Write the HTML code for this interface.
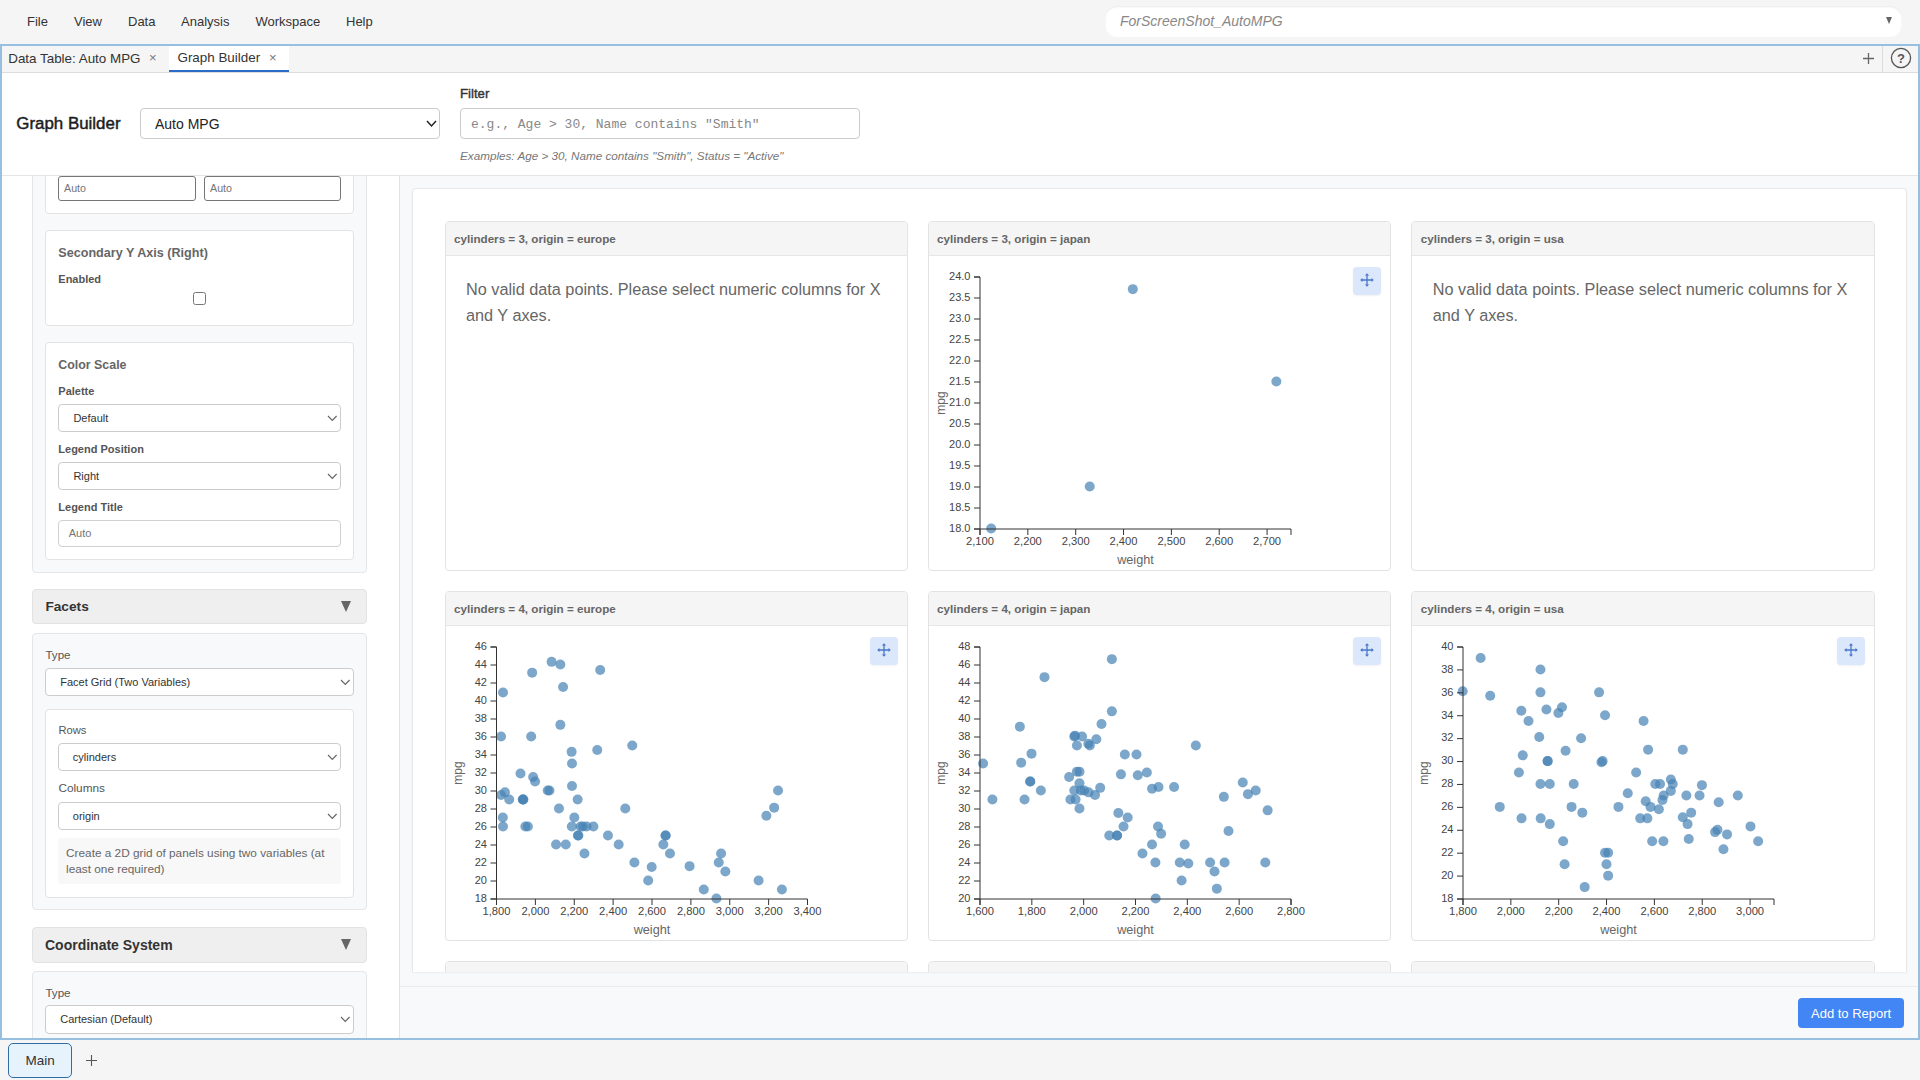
<!DOCTYPE html>
<html><head><meta charset="utf-8"><title>Graph Builder</title>
<style>html,body{margin:0;padding:0;}body{width:1920px;height:1080px;overflow:hidden;position:relative;background:#f5f5f5;font-family:'Liberation Sans', sans-serif;}</style>
</head><body>
<div style="position:absolute;left:27px;top:15.00px;font-family:'Liberation Sans', sans-serif;font-size:13px;line-height:13px;color:#333;font-weight:400;font-style:normal;white-space:nowrap;">File</div><div style="position:absolute;left:74px;top:15.00px;font-family:'Liberation Sans', sans-serif;font-size:13px;line-height:13px;color:#333;font-weight:400;font-style:normal;white-space:nowrap;">View</div><div style="position:absolute;left:128px;top:15.00px;font-family:'Liberation Sans', sans-serif;font-size:13px;line-height:13px;color:#333;font-weight:400;font-style:normal;white-space:nowrap;">Data</div><div style="position:absolute;left:181px;top:15.00px;font-family:'Liberation Sans', sans-serif;font-size:13px;line-height:13px;color:#333;font-weight:400;font-style:normal;white-space:nowrap;">Analysis</div><div style="position:absolute;left:255.5px;top:15.00px;font-family:'Liberation Sans', sans-serif;font-size:13px;line-height:13px;color:#333;font-weight:400;font-style:normal;white-space:nowrap;">Workspace</div><div style="position:absolute;left:346px;top:15.00px;font-family:'Liberation Sans', sans-serif;font-size:13px;line-height:13px;color:#333;font-weight:400;font-style:normal;white-space:nowrap;">Help</div><div style="position:absolute;left:1105px;top:6px;width:797px;height:31px;box-sizing:border-box;background:#fff;border-radius:12px;box-shadow:inset 0 1px 2px rgba(0,0,0,0.09);"></div><div style="position:absolute;left:1120px;top:14.00px;font-family:'Liberation Sans', sans-serif;font-size:14px;line-height:14px;color:#888;font-weight:400;font-style:italic;white-space:nowrap;">ForScreenShot_AutoMPG</div><div style="position:absolute;left:1886px;top:17px;width:0;height:0;border-left:3.5px solid transparent;border-right:3.5px solid transparent;border-top:7px solid #666"></div><div style="position:absolute;left:0px;top:44px;width:1920px;height:996px;box-sizing:border-box;border:2px solid #97c0e0;background:#fff;"></div><div style="position:absolute;left:2px;top:46px;width:1916px;height:27px;box-sizing:border-box;background:#f5f5f5;border-bottom:1px solid #dcdcdc;"></div><div style="position:absolute;left:8.25px;top:52.10px;font-family:'Liberation Sans', sans-serif;font-size:13.4px;line-height:13.4px;color:#333;font-weight:400;font-style:normal;white-space:nowrap;">Data Table: Auto MPG</div><div style="position:absolute;left:149px;top:51.00px;font-family:'Liberation Sans', sans-serif;font-size:13px;line-height:13px;color:#777;font-weight:400;font-style:normal;white-space:nowrap;">&#215;</div><div style="position:absolute;left:169px;top:46px;width:120px;height:26px;box-sizing:border-box;background:#fff;border-bottom:2px solid #2b6cc8;"></div><div style="position:absolute;left:177.5px;top:50.80px;font-family:'Liberation Sans', sans-serif;font-size:13.4px;line-height:13.4px;color:#333;font-weight:400;font-style:normal;white-space:nowrap;">Graph Builder</div><div style="position:absolute;left:269px;top:51.00px;font-family:'Liberation Sans', sans-serif;font-size:13px;line-height:13px;color:#777;font-weight:400;font-style:normal;white-space:nowrap;">&#215;</div><svg style="position:absolute;left:1862px;top:52px" width="13" height="13"><path d="M6.5 1V12M1 6.5H12" stroke="#666" stroke-width="1.3"/></svg><div style="position:absolute;left:1882px;top:46px;width:1px;height:26px;box-sizing:border-box;background:#dcdcdc;"></div><svg style="position:absolute;left:1890px;top:47px" width="22" height="22"><circle cx="11" cy="11" r="9.6" fill="none" stroke="#555" stroke-width="1.3"/><text x="11" y="15.5" text-anchor="middle" font-family="Liberation Sans" font-size="13" font-weight="700" fill="#555">?</text></svg><div style="position:absolute;left:2px;top:73px;width:1916px;height:103px;box-sizing:border-box;background:#fff;border-bottom:1px solid #e6e6e6;"></div><div style="position:absolute;left:16.3px;top:116.25px;font-family:'Liberation Sans', sans-serif;font-size:16.9px;line-height:16.9px;color:#1c1c1c;font-weight:400;font-style:normal;white-space:nowrap;-webkit-text-stroke:0.45px #1c1c1c;">Graph Builder</div><div style="position:absolute;left:140px;top:108px;width:300px;height:31px;box-sizing:border-box;background:#fff;border:1px solid #ccc;border-radius:4px;"></div><div style="position:absolute;left:155px;top:116.50px;font-family:'Liberation Sans', sans-serif;font-size:14px;line-height:14px;color:#222;font-weight:400;font-style:normal;white-space:nowrap;">Auto MPG</div><svg style="position:absolute;left:425.00px;top:119.00px" width="13.00" height="9.00"><polyline points="2,2 6.50,7.00 11.00,2" fill="none" stroke="#222" stroke-width="1.5"/></svg><div style="position:absolute;left:460px;top:86.90px;font-family:'Liberation Sans', sans-serif;font-size:13.2px;line-height:13.2px;color:#333;font-weight:400;font-style:normal;white-space:nowrap;-webkit-text-stroke:0.4px #333;">Filter</div><div style="position:absolute;left:460px;top:108px;width:400px;height:31px;box-sizing:border-box;background:#fff;border:1px solid #ccc;border-radius:4px;"></div><div style="position:absolute;left:471px;top:118.00px;font-family:'Liberation Mono', monospace;font-size:13px;line-height:13px;color:#888;font-weight:400;font-style:normal;white-space:nowrap;">e.g., Age &gt; 30, Name contains "Smith"</div><div style="position:absolute;left:460px;top:149.95px;font-family:'Liberation Sans', sans-serif;font-size:11.7px;line-height:11.7px;color:#777;font-weight:400;font-style:italic;white-space:nowrap;">Examples: Age &gt; 30, Name contains "Smith", Status = "Active"</div><div style="position:absolute;left:2px;top:176px;width:398px;height:862px;overflow:hidden"><div style="position:absolute;left:0px;top:0px;width:398px;height:862px;box-sizing:border-box;background:#fff;border-right:1px solid #e2e2e2;"></div><div style="position:absolute;left:30px;top:-76px;width:335px;height:473px;box-sizing:border-box;background:#f8f9fa;border:1px solid #e6e6e6;border-radius:4px;"></div><div style="position:absolute;left:43px;top:-56px;width:309px;height:94px;box-sizing:border-box;background:#fff;border:1px solid #e3e3e3;border-radius:4px;"></div><div style="position:absolute;left:56px;top:0px;width:138px;height:25px;box-sizing:border-box;background:#fff;border:1px solid #767676;border-radius:3px;"></div><div style="position:absolute;left:202px;top:0px;width:137px;height:25px;box-sizing:border-box;background:#fff;border:1px solid #767676;border-radius:3px;"></div><div style="position:absolute;left:62px;top:7.15px;font-family:'Liberation Sans', sans-serif;font-size:10.7px;line-height:10.7px;color:#757575;font-weight:400;font-style:normal;white-space:nowrap;">Auto</div><div style="position:absolute;left:208px;top:7.15px;font-family:'Liberation Sans', sans-serif;font-size:10.7px;line-height:10.7px;color:#757575;font-weight:400;font-style:normal;white-space:nowrap;">Auto</div><div style="position:absolute;left:43px;top:54px;width:309px;height:96px;box-sizing:border-box;background:#fff;border:1px solid #e3e3e3;border-radius:4px;"></div><div style="position:absolute;left:56.3px;top:71.00px;font-family:'Liberation Sans', sans-serif;font-size:12.6px;line-height:12.6px;color:#666;font-weight:700;font-style:normal;white-space:nowrap;">Secondary Y Axis (Right)</div><div style="position:absolute;left:56.3px;top:98.00px;font-family:'Liberation Sans', sans-serif;font-size:11px;line-height:11px;color:#555;font-weight:700;font-style:normal;white-space:nowrap;">Enabled</div><div style="position:absolute;left:191px;top:116px;width:13px;height:13px;box-sizing:border-box;background:#fff;border:1px solid #767676;border-radius:2.5px;"></div><div style="position:absolute;left:43px;top:166px;width:309px;height:218px;box-sizing:border-box;background:#fff;border:1px solid #e3e3e3;border-radius:4px;"></div><div style="position:absolute;left:56.3px;top:183.10px;font-family:'Liberation Sans', sans-serif;font-size:12.4px;line-height:12.4px;color:#666;font-weight:700;font-style:normal;white-space:nowrap;">Color Scale</div><div style="position:absolute;left:56.3px;top:210.00px;font-family:'Liberation Sans', sans-serif;font-size:11px;line-height:11px;color:#555;font-weight:700;font-style:normal;white-space:nowrap;">Palette</div><div style="position:absolute;left:56px;top:228px;width:283px;height:28px;box-sizing:border-box;background:#fff;border:1px solid #ccc;border-radius:4px;"></div><div style="position:absolute;left:71.4px;top:236.50px;font-family:'Liberation Sans', sans-serif;font-size:11px;line-height:11px;color:#333;font-weight:400;font-style:normal;white-space:nowrap;">Default</div><svg style="position:absolute;left:324.20px;top:237.85px" width="12.60" height="8.30"><polyline points="2,2 6.30,6.30 10.60,2" fill="none" stroke="#666" stroke-width="1.2"/></svg><div style="position:absolute;left:56.3px;top:268.00px;font-family:'Liberation Sans', sans-serif;font-size:11px;line-height:11px;color:#555;font-weight:700;font-style:normal;white-space:nowrap;">Legend Position</div><div style="position:absolute;left:56px;top:286px;width:283px;height:28px;box-sizing:border-box;background:#fff;border:1px solid #ccc;border-radius:4px;"></div><div style="position:absolute;left:71.4px;top:294.50px;font-family:'Liberation Sans', sans-serif;font-size:11px;line-height:11px;color:#333;font-weight:400;font-style:normal;white-space:nowrap;">Right</div><svg style="position:absolute;left:324.20px;top:295.85px" width="12.60" height="8.30"><polyline points="2,2 6.30,6.30 10.60,2" fill="none" stroke="#666" stroke-width="1.2"/></svg><div style="position:absolute;left:56.3px;top:326.00px;font-family:'Liberation Sans', sans-serif;font-size:11px;line-height:11px;color:#555;font-weight:700;font-style:normal;white-space:nowrap;">Legend Title</div><div style="position:absolute;left:56px;top:344px;width:283px;height:27px;box-sizing:border-box;background:#fff;border:1px solid #d0d0d0;border-radius:4px;"></div><div style="position:absolute;left:66.7px;top:352.00px;font-family:'Liberation Sans', sans-serif;font-size:11px;line-height:11px;color:#757575;font-weight:400;font-style:normal;white-space:nowrap;">Auto</div><div style="position:absolute;left:30px;top:413px;width:335px;height:35px;box-sizing:border-box;background:#efefef;border:1px solid #e2e2e2;border-radius:4px;"></div><div style="position:absolute;left:43.4px;top:423.95px;font-family:'Liberation Sans', sans-serif;font-size:13.7px;line-height:13.7px;color:#333;font-weight:700;font-style:normal;white-space:nowrap;">Facets</div><div style="position:absolute;left:339px;top:424.79999999999995px;width:0;height:0;border-left:5.5px solid transparent;border-right:5.5px solid transparent;border-top:11px solid #666"></div><div style="position:absolute;left:30px;top:457px;width:335px;height:277px;box-sizing:border-box;background:#f8f9fa;border:1px solid #e6e6e6;border-radius:4px;"></div><div style="position:absolute;left:43.4px;top:473.00px;font-family:'Liberation Sans', sans-serif;font-size:11.6px;line-height:11.6px;color:#555;font-weight:400;font-style:normal;white-space:nowrap;">Type</div><div style="position:absolute;left:43px;top:492px;width:309px;height:28px;box-sizing:border-box;background:#fff;border:1px solid #ccc;border-radius:4px;"></div><div style="position:absolute;left:58.2px;top:500.50px;font-family:'Liberation Sans', sans-serif;font-size:11px;line-height:11px;color:#333;font-weight:400;font-style:normal;white-space:nowrap;">Facet Grid (Two Variables)</div><svg style="position:absolute;left:337.20px;top:501.85px" width="12.60" height="8.30"><polyline points="2,2 6.30,6.30 10.60,2" fill="none" stroke="#666" stroke-width="1.2"/></svg><div style="position:absolute;left:43px;top:533px;width:309px;height:189px;box-sizing:border-box;background:#fff;border:1px solid #e3e3e3;border-radius:4px;"></div><div style="position:absolute;left:56.4px;top:548.90px;font-family:'Liberation Sans', sans-serif;font-size:11.2px;line-height:11.2px;color:#555;font-weight:400;font-style:normal;white-space:nowrap;">Rows</div><div style="position:absolute;left:56px;top:567px;width:283px;height:28px;box-sizing:border-box;background:#fff;border:1px solid #ccc;border-radius:4px;"></div><div style="position:absolute;left:70.8px;top:575.50px;font-family:'Liberation Sans', sans-serif;font-size:11px;line-height:11px;color:#333;font-weight:400;font-style:normal;white-space:nowrap;">cylinders</div><svg style="position:absolute;left:324.20px;top:576.85px" width="12.60" height="8.30"><polyline points="2,2 6.30,6.30 10.60,2" fill="none" stroke="#666" stroke-width="1.2"/></svg><div style="position:absolute;left:56.4px;top:606.60px;font-family:'Liberation Sans', sans-serif;font-size:11.8px;line-height:11.8px;color:#555;font-weight:400;font-style:normal;white-space:nowrap;">Columns</div><div style="position:absolute;left:56px;top:626px;width:283px;height:28px;box-sizing:border-box;background:#fff;border:1px solid #ccc;border-radius:4px;"></div><div style="position:absolute;left:70.8px;top:634.50px;font-family:'Liberation Sans', sans-serif;font-size:11px;line-height:11px;color:#333;font-weight:400;font-style:normal;white-space:nowrap;">origin</div><svg style="position:absolute;left:324.20px;top:635.85px" width="12.60" height="8.30"><polyline points="2,2 6.30,6.30 10.60,2" fill="none" stroke="#666" stroke-width="1.2"/></svg><div style="position:absolute;left:56px;top:662px;width:283px;height:46px;box-sizing:border-box;background:#f8f8f8;border-radius:3px;"></div><div style="position:absolute;left:64.1px;top:672.30px;font-family:'Liberation Sans', sans-serif;font-size:11.8px;line-height:11.8px;color:#666;font-weight:400;font-style:normal;white-space:nowrap;">Create a 2D grid of panels using two variables (at</div><div style="position:absolute;left:64.1px;top:688.30px;font-family:'Liberation Sans', sans-serif;font-size:11.8px;line-height:11.8px;color:#666;font-weight:400;font-style:normal;white-space:nowrap;">least one required)</div><div style="position:absolute;left:30px;top:751px;width:335px;height:36px;box-sizing:border-box;background:#efefef;border:1px solid #e2e2e2;border-radius:4px;"></div><div style="position:absolute;left:43px;top:761.50px;font-family:'Liberation Sans', sans-serif;font-size:14px;line-height:14px;color:#333;font-weight:700;font-style:normal;white-space:nowrap;">Coordinate System</div><div style="position:absolute;left:339px;top:762.5px;width:0;height:0;border-left:5.5px solid transparent;border-right:5.5px solid transparent;border-top:11px solid #666"></div><div style="position:absolute;left:30px;top:795px;width:335px;height:229px;box-sizing:border-box;background:#f8f9fa;border:1px solid #e6e6e6;border-radius:4px;"></div><div style="position:absolute;left:43.4px;top:810.80px;font-family:'Liberation Sans', sans-serif;font-size:11.6px;line-height:11.6px;color:#555;font-weight:400;font-style:normal;white-space:nowrap;">Type</div><div style="position:absolute;left:43px;top:829px;width:309px;height:29px;box-sizing:border-box;background:#fff;border:1px solid #ccc;border-radius:4px;"></div><div style="position:absolute;left:58.2px;top:838.00px;font-family:'Liberation Sans', sans-serif;font-size:11px;line-height:11px;color:#333;font-weight:400;font-style:normal;white-space:nowrap;">Cartesian (Default)</div><svg style="position:absolute;left:337.20px;top:839.35px" width="12.60" height="8.30"><polyline points="2,2 6.30,6.30 10.60,2" fill="none" stroke="#666" stroke-width="1.2"/></svg></div><div style="position:absolute;left:400px;top:176px;width:1518px;height:862px;box-sizing:border-box;background:#f8f9fa;"></div><div style="position:absolute;left:400px;top:985.5px;width:1518px;height:1.0px;box-sizing:border-box;background:#eaecee;"></div><div style="position:absolute;left:1798px;top:998px;width:106px;height:30px;box-sizing:border-box;background:#4285f4;border-radius:4px;"></div><div style="position:absolute;left:1811px;top:1007.00px;font-family:'Liberation Sans', sans-serif;font-size:13px;line-height:13px;color:#fff;font-weight:400;font-style:normal;white-space:nowrap;">Add to Report</div><div style="position:absolute;left:412px;top:188px;width:1495px;height:784px;box-sizing:border-box;border:1px solid #e8e8e8;border-bottom:0;border-radius:4px 4px 0 0;background:#fff;overflow:hidden;box-shadow:0 1px 2px rgba(0,0,0,0.05)"><div style="position:absolute;left:-413px;top:-189px;width:1920px;height:1080px"><div style="position:absolute;left:445px;top:221px;width:463px;height:350px;box-sizing:border-box;background:#fff;border:1px solid #e3e3e3;border-radius:4px;"></div><div style="position:absolute;left:446px;top:222px;width:461px;height:34px;box-sizing:border-box;background:#f5f5f5;border-bottom:1px solid #e6e6e6;border-radius:3px 3px 0 0;"></div><div style="position:absolute;left:454px;top:233.18px;font-family:'Liberation Sans', sans-serif;font-size:11.65px;line-height:11.65px;color:#666;font-weight:700;font-style:normal;white-space:nowrap;">cylinders = 3, origin = europe</div><div style="position:absolute;left:466px;top:280.88px;font-family:'Liberation Sans', sans-serif;font-size:16.25px;line-height:16.25px;color:#666;font-weight:400;font-style:normal;white-space:nowrap;">No valid data points. Please select numeric columns for X</div><div style="position:absolute;left:466px;top:306.88px;font-family:'Liberation Sans', sans-serif;font-size:16.25px;line-height:16.25px;color:#666;font-weight:400;font-style:normal;white-space:nowrap;">and Y axes.</div><div style="position:absolute;left:928px;top:221px;width:463px;height:350px;box-sizing:border-box;background:#fff;border:1px solid #e3e3e3;border-radius:4px;"></div><div style="position:absolute;left:929px;top:222px;width:461px;height:34px;box-sizing:border-box;background:#f5f5f5;border-bottom:1px solid #e6e6e6;border-radius:3px 3px 0 0;"></div><div style="position:absolute;left:937px;top:233.18px;font-family:'Liberation Sans', sans-serif;font-size:11.65px;line-height:11.65px;color:#666;font-weight:700;font-style:normal;white-space:nowrap;">cylinders = 3, origin = japan</div><svg style="position:absolute;left:928px;top:256px;overflow:visible" width="463" height="314"><circle cx="161.75" cy="230.55" r="5" fill="#4682b4" fill-opacity="0.7"/><circle cx="63.18" cy="272.55" r="5" fill="#4682b4" fill-opacity="0.7"/><circle cx="348.35" cy="125.55" r="5" fill="#4682b4" fill-opacity="0.7"/><circle cx="204.81" cy="33.15" r="5" fill="#4682b4" fill-opacity="0.7"/><path d="M46,21H52V273H46" fill="none" stroke="#333" stroke-width="1"/><line x1="46" x2="52" y1="273.00" y2="273.00" stroke="#333" stroke-width="1"/><text x="42.5" y="275.80" text-anchor="end" font-family="Liberation Sans" font-size="11" fill="#444">18.0</text><line x1="46" x2="52" y1="252.00" y2="252.00" stroke="#333" stroke-width="1"/><text x="42.5" y="254.80" text-anchor="end" font-family="Liberation Sans" font-size="11" fill="#444">18.5</text><line x1="46" x2="52" y1="231.00" y2="231.00" stroke="#333" stroke-width="1"/><text x="42.5" y="233.80" text-anchor="end" font-family="Liberation Sans" font-size="11" fill="#444">19.0</text><line x1="46" x2="52" y1="210.00" y2="210.00" stroke="#333" stroke-width="1"/><text x="42.5" y="212.80" text-anchor="end" font-family="Liberation Sans" font-size="11" fill="#444">19.5</text><line x1="46" x2="52" y1="189.00" y2="189.00" stroke="#333" stroke-width="1"/><text x="42.5" y="191.80" text-anchor="end" font-family="Liberation Sans" font-size="11" fill="#444">20.0</text><line x1="46" x2="52" y1="168.00" y2="168.00" stroke="#333" stroke-width="1"/><text x="42.5" y="170.80" text-anchor="end" font-family="Liberation Sans" font-size="11" fill="#444">20.5</text><line x1="46" x2="52" y1="147.00" y2="147.00" stroke="#333" stroke-width="1"/><text x="42.5" y="149.80" text-anchor="end" font-family="Liberation Sans" font-size="11" fill="#444">21.0</text><line x1="46" x2="52" y1="126.00" y2="126.00" stroke="#333" stroke-width="1"/><text x="42.5" y="128.80" text-anchor="end" font-family="Liberation Sans" font-size="11" fill="#444">21.5</text><line x1="46" x2="52" y1="105.00" y2="105.00" stroke="#333" stroke-width="1"/><text x="42.5" y="107.80" text-anchor="end" font-family="Liberation Sans" font-size="11" fill="#444">22.0</text><line x1="46" x2="52" y1="84.00" y2="84.00" stroke="#333" stroke-width="1"/><text x="42.5" y="86.80" text-anchor="end" font-family="Liberation Sans" font-size="11" fill="#444">22.5</text><line x1="46" x2="52" y1="63.00" y2="63.00" stroke="#333" stroke-width="1"/><text x="42.5" y="65.80" text-anchor="end" font-family="Liberation Sans" font-size="11" fill="#444">23.0</text><line x1="46" x2="52" y1="42.00" y2="42.00" stroke="#333" stroke-width="1"/><text x="42.5" y="44.80" text-anchor="end" font-family="Liberation Sans" font-size="11" fill="#444">23.5</text><line x1="46" x2="52" y1="21.00" y2="21.00" stroke="#333" stroke-width="1"/><text x="42.5" y="23.80" text-anchor="end" font-family="Liberation Sans" font-size="11" fill="#444">24.0</text><path d="M52,279V273H363V279" fill="none" stroke="#333" stroke-width="1"/><line x1="52.00" x2="52.00" y1="273" y2="279" stroke="#333" stroke-width="1"/><text x="52.00" y="288.50" text-anchor="middle" font-family="Liberation Sans" font-size="11.2" fill="#444">2,100</text><line x1="99.85" x2="99.85" y1="273" y2="279" stroke="#333" stroke-width="1"/><text x="99.85" y="288.50" text-anchor="middle" font-family="Liberation Sans" font-size="11.2" fill="#444">2,200</text><line x1="147.69" x2="147.69" y1="273" y2="279" stroke="#333" stroke-width="1"/><text x="147.69" y="288.50" text-anchor="middle" font-family="Liberation Sans" font-size="11.2" fill="#444">2,300</text><line x1="195.54" x2="195.54" y1="273" y2="279" stroke="#333" stroke-width="1"/><text x="195.54" y="288.50" text-anchor="middle" font-family="Liberation Sans" font-size="11.2" fill="#444">2,400</text><line x1="243.38" x2="243.38" y1="273" y2="279" stroke="#333" stroke-width="1"/><text x="243.38" y="288.50" text-anchor="middle" font-family="Liberation Sans" font-size="11.2" fill="#444">2,500</text><line x1="291.23" x2="291.23" y1="273" y2="279" stroke="#333" stroke-width="1"/><text x="291.23" y="288.50" text-anchor="middle" font-family="Liberation Sans" font-size="11.2" fill="#444">2,600</text><line x1="339.08" x2="339.08" y1="273" y2="279" stroke="#333" stroke-width="1"/><text x="339.08" y="288.50" text-anchor="middle" font-family="Liberation Sans" font-size="11.2" fill="#444">2,700</text><text x="207.50" y="308" text-anchor="middle" font-family="Liberation Sans" font-size="12.7" fill="#666">weight</text><text transform="translate(17.30,147.00) rotate(-90)" text-anchor="middle" font-family="Liberation Sans" font-size="12" fill="#666">mpg</text></svg><div style="position:absolute;left:1353px;top:266.5px;width:28px;height:28.0px;box-sizing:border-box;background:#dbe7fb;border-radius:4px;box-shadow:0 1px 2px rgba(0,0,0,0.06);"></div><svg style="position:absolute;left:1358.5px;top:272.2px" width="16" height="16"><path d="M8 2.2V13.8M2.2 8H13.8" stroke="#4a78c8" stroke-width="1.3"/><path d="M6.6 3.6L8 2 9.4 3.6M6.6 12.4L8 14 9.4 12.4M3.6 6.6L2 8 3.6 9.4M12.4 6.6L14 8 12.4 9.4" fill="none" stroke="#4a78c8" stroke-width="1.1"/></svg><div style="position:absolute;left:1411px;top:221px;width:464px;height:350px;box-sizing:border-box;background:#fff;border:1px solid #e3e3e3;border-radius:4px;"></div><div style="position:absolute;left:1412px;top:222px;width:462px;height:34px;box-sizing:border-box;background:#f5f5f5;border-bottom:1px solid #e6e6e6;border-radius:3px 3px 0 0;"></div><div style="position:absolute;left:1420.8px;top:233.18px;font-family:'Liberation Sans', sans-serif;font-size:11.65px;line-height:11.65px;color:#666;font-weight:700;font-style:normal;white-space:nowrap;">cylinders = 3, origin = usa</div><div style="position:absolute;left:1432.8px;top:280.88px;font-family:'Liberation Sans', sans-serif;font-size:16.25px;line-height:16.25px;color:#666;font-weight:400;font-style:normal;white-space:nowrap;">No valid data points. Please select numeric columns for X</div><div style="position:absolute;left:1432.8px;top:306.88px;font-family:'Liberation Sans', sans-serif;font-size:16.25px;line-height:16.25px;color:#666;font-weight:400;font-style:normal;white-space:nowrap;">and Y axes.</div><div style="position:absolute;left:445px;top:591px;width:463px;height:350px;box-sizing:border-box;background:#fff;border:1px solid #e3e3e3;border-radius:4px;"></div><div style="position:absolute;left:446px;top:592px;width:461px;height:34px;box-sizing:border-box;background:#f5f5f5;border-bottom:1px solid #e6e6e6;border-radius:3px 3px 0 0;"></div><div style="position:absolute;left:454px;top:603.17px;font-family:'Liberation Sans', sans-serif;font-size:11.65px;line-height:11.65px;color:#666;font-weight:700;font-style:normal;white-space:nowrap;">cylinders = 4, origin = europe</div><svg style="position:absolute;left:445px;top:626px;overflow:visible" width="463" height="314"><circle cx="58.00" cy="200.55" r="5" fill="#4682b4" fill-opacity="0.7"/><circle cx="220.69" cy="209.55" r="5" fill="#4682b4" fill-opacity="0.7"/><circle cx="173.66" cy="218.55" r="5" fill="#4682b4" fill-opacity="0.7"/><circle cx="162.97" cy="209.55" r="5" fill="#4682b4" fill-opacity="0.7"/><circle cx="135.56" cy="200.55" r="5" fill="#4682b4" fill-opacity="0.7"/><circle cx="113.98" cy="182.55" r="5" fill="#4682b4" fill-opacity="0.7"/><circle cx="104.46" cy="164.55" r="5" fill="#4682b4" fill-opacity="0.7"/><circle cx="102.71" cy="164.55" r="5" fill="#4682b4" fill-opacity="0.7"/><circle cx="57.81" cy="191.55" r="5" fill="#4682b4" fill-opacity="0.7"/><circle cx="139.45" cy="227.55" r="5" fill="#4682b4" fill-opacity="0.7"/><circle cx="271.43" cy="272.55" r="5" fill="#4682b4" fill-opacity="0.7"/><circle cx="189.40" cy="236.55" r="5" fill="#4682b4" fill-opacity="0.7"/><circle cx="280.37" cy="245.55" r="5" fill="#4682b4" fill-opacity="0.7"/><circle cx="126.81" cy="200.55" r="5" fill="#4682b4" fill-opacity="0.7"/><circle cx="80.36" cy="200.55" r="5" fill="#4682b4" fill-opacity="0.7"/><circle cx="141.58" cy="200.55" r="5" fill="#4682b4" fill-opacity="0.7"/><circle cx="64.22" cy="173.55" r="5" fill="#4682b4" fill-opacity="0.7"/><circle cx="120.79" cy="218.55" r="5" fill="#4682b4" fill-opacity="0.7"/><circle cx="203.20" cy="254.55" r="5" fill="#4682b4" fill-opacity="0.7"/><circle cx="258.79" cy="263.55" r="5" fill="#4682b4" fill-opacity="0.7"/><circle cx="218.36" cy="218.55" r="5" fill="#4682b4" fill-opacity="0.7"/><circle cx="132.64" cy="173.55" r="5" fill="#4682b4" fill-opacity="0.7"/><circle cx="82.88" cy="200.55" r="5" fill="#4682b4" fill-opacity="0.7"/><circle cx="148.39" cy="200.55" r="5" fill="#4682b4" fill-opacity="0.7"/><circle cx="111.07" cy="218.55" r="5" fill="#4682b4" fill-opacity="0.7"/><circle cx="137.89" cy="200.55" r="5" fill="#4682b4" fill-opacity="0.7"/><circle cx="90.08" cy="155.55" r="5" fill="#4682b4" fill-opacity="0.7"/><circle cx="133.42" cy="209.55" r="5" fill="#4682b4" fill-opacity="0.7"/><circle cx="77.83" cy="173.55" r="5" fill="#4682b4" fill-opacity="0.7"/><circle cx="224.97" cy="227.55" r="5" fill="#4682b4" fill-opacity="0.7"/><circle cx="276.09" cy="227.55" r="5" fill="#4682b4" fill-opacity="0.7"/><circle cx="273.76" cy="236.55" r="5" fill="#4682b4" fill-opacity="0.7"/><circle cx="220.50" cy="209.55" r="5" fill="#4682b4" fill-opacity="0.7"/><circle cx="180.27" cy="182.55" r="5" fill="#4682b4" fill-opacity="0.7"/><circle cx="132.84" cy="209.55" r="5" fill="#4682b4" fill-opacity="0.7"/><circle cx="129.34" cy="191.55" r="5" fill="#4682b4" fill-opacity="0.7"/><circle cx="77.83" cy="173.55" r="5" fill="#4682b4" fill-opacity="0.7"/><circle cx="56.06" cy="169.05" r="5" fill="#4682b4" fill-opacity="0.7"/><circle cx="313.61" cy="254.55" r="5" fill="#4682b4" fill-opacity="0.7"/><circle cx="336.93" cy="263.55" r="5" fill="#4682b4" fill-opacity="0.7"/><circle cx="56.06" cy="110.55" r="5" fill="#4682b4" fill-opacity="0.7"/><circle cx="78.41" cy="173.55" r="5" fill="#4682b4" fill-opacity="0.7"/><circle cx="127.01" cy="160.05" r="5" fill="#4682b4" fill-opacity="0.7"/><circle cx="206.70" cy="241.05" r="5" fill="#4682b4" fill-opacity="0.7"/><circle cx="87.16" cy="46.65" r="5" fill="#4682b4" fill-opacity="0.7"/><circle cx="244.60" cy="240.15" r="5" fill="#4682b4" fill-opacity="0.7"/><circle cx="88.13" cy="151.05" r="5" fill="#4682b4" fill-opacity="0.7"/><circle cx="75.50" cy="147.45" r="5" fill="#4682b4" fill-opacity="0.7"/><circle cx="321.38" cy="189.75" r="5" fill="#4682b4" fill-opacity="0.7"/><circle cx="115.34" cy="98.85" r="5" fill="#4682b4" fill-opacity="0.7"/><circle cx="118.07" cy="61.05" r="5" fill="#4682b4" fill-opacity="0.7"/><circle cx="126.62" cy="125.85" r="5" fill="#4682b4" fill-opacity="0.7"/><circle cx="106.60" cy="35.85" r="5" fill="#4682b4" fill-opacity="0.7"/><circle cx="155.19" cy="43.95" r="5" fill="#4682b4" fill-opacity="0.7"/><circle cx="333.04" cy="164.55" r="5" fill="#4682b4" fill-opacity="0.7"/><circle cx="58.00" cy="66.45" r="5" fill="#4682b4" fill-opacity="0.7"/><circle cx="59.95" cy="166.35" r="5" fill="#4682b4" fill-opacity="0.7"/><circle cx="187.26" cy="119.55" r="5" fill="#4682b4" fill-opacity="0.7"/><circle cx="127.01" cy="137.55" r="5" fill="#4682b4" fill-opacity="0.7"/><circle cx="152.28" cy="124.05" r="5" fill="#4682b4" fill-opacity="0.7"/><circle cx="329.16" cy="181.65" r="5" fill="#4682b4" fill-opacity="0.7"/><circle cx="86.19" cy="110.55" r="5" fill="#4682b4" fill-opacity="0.7"/><circle cx="115.34" cy="38.55" r="5" fill="#4682b4" fill-opacity="0.7"/><path d="M45.5,21H51.5V273H45.5" fill="none" stroke="#333" stroke-width="1"/><line x1="45.5" x2="51.5" y1="273.00" y2="273.00" stroke="#333" stroke-width="1"/><text x="42.0" y="275.80" text-anchor="end" font-family="Liberation Sans" font-size="11" fill="#444">18</text><line x1="45.5" x2="51.5" y1="255.00" y2="255.00" stroke="#333" stroke-width="1"/><text x="42.0" y="257.80" text-anchor="end" font-family="Liberation Sans" font-size="11" fill="#444">20</text><line x1="45.5" x2="51.5" y1="237.00" y2="237.00" stroke="#333" stroke-width="1"/><text x="42.0" y="239.80" text-anchor="end" font-family="Liberation Sans" font-size="11" fill="#444">22</text><line x1="45.5" x2="51.5" y1="219.00" y2="219.00" stroke="#333" stroke-width="1"/><text x="42.0" y="221.80" text-anchor="end" font-family="Liberation Sans" font-size="11" fill="#444">24</text><line x1="45.5" x2="51.5" y1="201.00" y2="201.00" stroke="#333" stroke-width="1"/><text x="42.0" y="203.80" text-anchor="end" font-family="Liberation Sans" font-size="11" fill="#444">26</text><line x1="45.5" x2="51.5" y1="183.00" y2="183.00" stroke="#333" stroke-width="1"/><text x="42.0" y="185.80" text-anchor="end" font-family="Liberation Sans" font-size="11" fill="#444">28</text><line x1="45.5" x2="51.5" y1="165.00" y2="165.00" stroke="#333" stroke-width="1"/><text x="42.0" y="167.80" text-anchor="end" font-family="Liberation Sans" font-size="11" fill="#444">30</text><line x1="45.5" x2="51.5" y1="147.00" y2="147.00" stroke="#333" stroke-width="1"/><text x="42.0" y="149.80" text-anchor="end" font-family="Liberation Sans" font-size="11" fill="#444">32</text><line x1="45.5" x2="51.5" y1="129.00" y2="129.00" stroke="#333" stroke-width="1"/><text x="42.0" y="131.80" text-anchor="end" font-family="Liberation Sans" font-size="11" fill="#444">34</text><line x1="45.5" x2="51.5" y1="111.00" y2="111.00" stroke="#333" stroke-width="1"/><text x="42.0" y="113.80" text-anchor="end" font-family="Liberation Sans" font-size="11" fill="#444">36</text><line x1="45.5" x2="51.5" y1="93.00" y2="93.00" stroke="#333" stroke-width="1"/><text x="42.0" y="95.80" text-anchor="end" font-family="Liberation Sans" font-size="11" fill="#444">38</text><line x1="45.5" x2="51.5" y1="75.00" y2="75.00" stroke="#333" stroke-width="1"/><text x="42.0" y="77.80" text-anchor="end" font-family="Liberation Sans" font-size="11" fill="#444">40</text><line x1="45.5" x2="51.5" y1="57.00" y2="57.00" stroke="#333" stroke-width="1"/><text x="42.0" y="59.80" text-anchor="end" font-family="Liberation Sans" font-size="11" fill="#444">42</text><line x1="45.5" x2="51.5" y1="39.00" y2="39.00" stroke="#333" stroke-width="1"/><text x="42.0" y="41.80" text-anchor="end" font-family="Liberation Sans" font-size="11" fill="#444">44</text><line x1="45.5" x2="51.5" y1="21.00" y2="21.00" stroke="#333" stroke-width="1"/><text x="42.0" y="23.80" text-anchor="end" font-family="Liberation Sans" font-size="11" fill="#444">46</text><path d="M51.5,279V273H362.5V279" fill="none" stroke="#333" stroke-width="1"/><line x1="51.50" x2="51.50" y1="273" y2="279" stroke="#333" stroke-width="1"/><text x="51.50" y="288.50" text-anchor="middle" font-family="Liberation Sans" font-size="11.2" fill="#444">1,800</text><line x1="90.38" x2="90.38" y1="273" y2="279" stroke="#333" stroke-width="1"/><text x="90.38" y="288.50" text-anchor="middle" font-family="Liberation Sans" font-size="11.2" fill="#444">2,000</text><line x1="129.25" x2="129.25" y1="273" y2="279" stroke="#333" stroke-width="1"/><text x="129.25" y="288.50" text-anchor="middle" font-family="Liberation Sans" font-size="11.2" fill="#444">2,200</text><line x1="168.12" x2="168.12" y1="273" y2="279" stroke="#333" stroke-width="1"/><text x="168.12" y="288.50" text-anchor="middle" font-family="Liberation Sans" font-size="11.2" fill="#444">2,400</text><line x1="207.00" x2="207.00" y1="273" y2="279" stroke="#333" stroke-width="1"/><text x="207.00" y="288.50" text-anchor="middle" font-family="Liberation Sans" font-size="11.2" fill="#444">2,600</text><line x1="245.88" x2="245.88" y1="273" y2="279" stroke="#333" stroke-width="1"/><text x="245.88" y="288.50" text-anchor="middle" font-family="Liberation Sans" font-size="11.2" fill="#444">2,800</text><line x1="284.75" x2="284.75" y1="273" y2="279" stroke="#333" stroke-width="1"/><text x="284.75" y="288.50" text-anchor="middle" font-family="Liberation Sans" font-size="11.2" fill="#444">3,000</text><line x1="323.62" x2="323.62" y1="273" y2="279" stroke="#333" stroke-width="1"/><text x="323.62" y="288.50" text-anchor="middle" font-family="Liberation Sans" font-size="11.2" fill="#444">3,200</text><line x1="362.50" x2="362.50" y1="273" y2="279" stroke="#333" stroke-width="1"/><text x="362.50" y="288.50" text-anchor="middle" font-family="Liberation Sans" font-size="11.2" fill="#444">3,400</text><text x="207.00" y="308" text-anchor="middle" font-family="Liberation Sans" font-size="12.7" fill="#666">weight</text><text transform="translate(17.30,147.00) rotate(-90)" text-anchor="middle" font-family="Liberation Sans" font-size="12" fill="#666">mpg</text></svg><div style="position:absolute;left:870px;top:636.5px;width:28px;height:28.0px;box-sizing:border-box;background:#dbe7fb;border-radius:4px;box-shadow:0 1px 2px rgba(0,0,0,0.06);"></div><svg style="position:absolute;left:875.5px;top:642.2px" width="16" height="16"><path d="M8 2.2V13.8M2.2 8H13.8" stroke="#4a78c8" stroke-width="1.3"/><path d="M6.6 3.6L8 2 9.4 3.6M6.6 12.4L8 14 9.4 12.4M3.6 6.6L2 8 3.6 9.4M12.4 6.6L14 8 12.4 9.4" fill="none" stroke="#4a78c8" stroke-width="1.1"/></svg><div style="position:absolute;left:928px;top:591px;width:463px;height:350px;box-sizing:border-box;background:#fff;border:1px solid #e3e3e3;border-radius:4px;"></div><div style="position:absolute;left:929px;top:592px;width:461px;height:34px;box-sizing:border-box;background:#f5f5f5;border-bottom:1px solid #e6e6e6;border-radius:3px 3px 0 0;"></div><div style="position:absolute;left:937px;top:603.17px;font-family:'Liberation Sans', sans-serif;font-size:11.65px;line-height:11.65px;color:#666;font-weight:700;font-style:normal;white-space:nowrap;">cylinders = 4, origin = japan</div><svg style="position:absolute;left:928px;top:626px;overflow:visible" width="463" height="314"><circle cx="251.78" cy="236.55" r="5" fill="#4682b4" fill-opacity="0.7"/><circle cx="189.06" cy="209.55" r="5" fill="#4682b4" fill-opacity="0.7"/><circle cx="189.06" cy="209.55" r="5" fill="#4682b4" fill-opacity="0.7"/><circle cx="214.46" cy="227.55" r="5" fill="#4682b4" fill-opacity="0.7"/><circle cx="96.54" cy="173.55" r="5" fill="#4682b4" fill-opacity="0.7"/><circle cx="55.07" cy="137.55" r="5" fill="#4682b4" fill-opacity="0.7"/><circle cx="227.41" cy="236.55" r="5" fill="#4682b4" fill-opacity="0.7"/><circle cx="230.01" cy="200.55" r="5" fill="#4682b4" fill-opacity="0.7"/><circle cx="286.51" cy="245.55" r="5" fill="#4682b4" fill-opacity="0.7"/><circle cx="181.28" cy="209.55" r="5" fill="#4682b4" fill-opacity="0.7"/><circle cx="227.67" cy="272.55" r="5" fill="#4682b4" fill-opacity="0.7"/><circle cx="253.59" cy="254.55" r="5" fill="#4682b4" fill-opacity="0.7"/><circle cx="142.41" cy="173.55" r="5" fill="#4682b4" fill-opacity="0.7"/><circle cx="112.86" cy="164.55" r="5" fill="#4682b4" fill-opacity="0.7"/><circle cx="64.40" cy="173.55" r="5" fill="#4682b4" fill-opacity="0.7"/><circle cx="156.14" cy="164.55" r="5" fill="#4682b4" fill-opacity="0.7"/><circle cx="282.10" cy="236.55" r="5" fill="#4682b4" fill-opacity="0.7"/><circle cx="256.70" cy="218.55" r="5" fill="#4682b4" fill-opacity="0.7"/><circle cx="199.68" cy="191.55" r="5" fill="#4682b4" fill-opacity="0.7"/><circle cx="337.30" cy="236.55" r="5" fill="#4682b4" fill-opacity="0.7"/><circle cx="296.61" cy="236.55" r="5" fill="#4682b4" fill-opacity="0.7"/><circle cx="102.24" cy="155.55" r="5" fill="#4682b4" fill-opacity="0.7"/><circle cx="102.24" cy="155.55" r="5" fill="#4682b4" fill-opacity="0.7"/><circle cx="152.78" cy="164.55" r="5" fill="#4682b4" fill-opacity="0.7"/><circle cx="195.54" cy="200.55" r="5" fill="#4682b4" fill-opacity="0.7"/><circle cx="167.03" cy="169.05" r="5" fill="#4682b4" fill-opacity="0.7"/><circle cx="141.11" cy="151.05" r="5" fill="#4682b4" fill-opacity="0.7"/><circle cx="224.05" cy="218.55" r="5" fill="#4682b4" fill-opacity="0.7"/><circle cx="151.48" cy="182.55" r="5" fill="#4682b4" fill-opacity="0.7"/><circle cx="151.48" cy="157.35" r="5" fill="#4682b4" fill-opacity="0.7"/><circle cx="173.51" cy="97.95" r="5" fill="#4682b4" fill-opacity="0.7"/><circle cx="103.53" cy="127.65" r="5" fill="#4682b4" fill-opacity="0.7"/><circle cx="300.50" cy="205.05" r="5" fill="#4682b4" fill-opacity="0.7"/><circle cx="233.12" cy="207.75" r="5" fill="#4682b4" fill-opacity="0.7"/><circle cx="288.84" cy="262.65" r="5" fill="#4682b4" fill-opacity="0.7"/><circle cx="260.33" cy="237.45" r="5" fill="#4682b4" fill-opacity="0.7"/><circle cx="190.35" cy="187.05" r="5" fill="#4682b4" fill-opacity="0.7"/><circle cx="148.89" cy="145.65" r="5" fill="#4682b4" fill-opacity="0.7"/><circle cx="160.55" cy="166.35" r="5" fill="#4682b4" fill-opacity="0.7"/><circle cx="147.07" cy="109.65" r="5" fill="#4682b4" fill-opacity="0.7"/><circle cx="160.29" cy="117.75" r="5" fill="#4682b4" fill-opacity="0.7"/><circle cx="339.63" cy="184.35" r="5" fill="#4682b4" fill-opacity="0.7"/><circle cx="295.83" cy="170.85" r="5" fill="#4682b4" fill-opacity="0.7"/><circle cx="267.84" cy="119.55" r="5" fill="#4682b4" fill-opacity="0.7"/><circle cx="224.05" cy="162.75" r="5" fill="#4682b4" fill-opacity="0.7"/><circle cx="183.87" cy="33.15" r="5" fill="#4682b4" fill-opacity="0.7"/><circle cx="183.87" cy="85.35" r="5" fill="#4682b4" fill-opacity="0.7"/><circle cx="116.49" cy="51.15" r="5" fill="#4682b4" fill-opacity="0.7"/><circle cx="192.95" cy="148.35" r="5" fill="#4682b4" fill-opacity="0.7"/><circle cx="230.53" cy="160.95" r="5" fill="#4682b4" fill-opacity="0.7"/><circle cx="91.87" cy="100.65" r="5" fill="#4682b4" fill-opacity="0.7"/><circle cx="93.17" cy="136.65" r="5" fill="#4682b4" fill-opacity="0.7"/><circle cx="172.21" cy="161.85" r="5" fill="#4682b4" fill-opacity="0.7"/><circle cx="148.89" cy="119.55" r="5" fill="#4682b4" fill-opacity="0.7"/><circle cx="168.32" cy="113.25" r="5" fill="#4682b4" fill-opacity="0.7"/><circle cx="151.48" cy="145.65" r="5" fill="#4682b4" fill-opacity="0.7"/><circle cx="209.79" cy="149.25" r="5" fill="#4682b4" fill-opacity="0.7"/><circle cx="246.07" cy="160.95" r="5" fill="#4682b4" fill-opacity="0.7"/><circle cx="314.75" cy="156.45" r="5" fill="#4682b4" fill-opacity="0.7"/><circle cx="319.94" cy="168.15" r="5" fill="#4682b4" fill-opacity="0.7"/><circle cx="161.85" cy="119.55" r="5" fill="#4682b4" fill-opacity="0.7"/><circle cx="147.59" cy="173.55" r="5" fill="#4682b4" fill-opacity="0.7"/><circle cx="196.83" cy="128.55" r="5" fill="#4682b4" fill-opacity="0.7"/><circle cx="208.50" cy="128.55" r="5" fill="#4682b4" fill-opacity="0.7"/><circle cx="218.86" cy="146.55" r="5" fill="#4682b4" fill-opacity="0.7"/><circle cx="146.30" cy="110.55" r="5" fill="#4682b4" fill-opacity="0.7"/><circle cx="146.30" cy="164.55" r="5" fill="#4682b4" fill-opacity="0.7"/><circle cx="154.07" cy="110.55" r="5" fill="#4682b4" fill-opacity="0.7"/><circle cx="327.71" cy="164.55" r="5" fill="#4682b4" fill-opacity="0.7"/><path d="M46,21H52V273H46" fill="none" stroke="#333" stroke-width="1"/><line x1="46" x2="52" y1="273.00" y2="273.00" stroke="#333" stroke-width="1"/><text x="42.5" y="275.80" text-anchor="end" font-family="Liberation Sans" font-size="11" fill="#444">20</text><line x1="46" x2="52" y1="255.00" y2="255.00" stroke="#333" stroke-width="1"/><text x="42.5" y="257.80" text-anchor="end" font-family="Liberation Sans" font-size="11" fill="#444">22</text><line x1="46" x2="52" y1="237.00" y2="237.00" stroke="#333" stroke-width="1"/><text x="42.5" y="239.80" text-anchor="end" font-family="Liberation Sans" font-size="11" fill="#444">24</text><line x1="46" x2="52" y1="219.00" y2="219.00" stroke="#333" stroke-width="1"/><text x="42.5" y="221.80" text-anchor="end" font-family="Liberation Sans" font-size="11" fill="#444">26</text><line x1="46" x2="52" y1="201.00" y2="201.00" stroke="#333" stroke-width="1"/><text x="42.5" y="203.80" text-anchor="end" font-family="Liberation Sans" font-size="11" fill="#444">28</text><line x1="46" x2="52" y1="183.00" y2="183.00" stroke="#333" stroke-width="1"/><text x="42.5" y="185.80" text-anchor="end" font-family="Liberation Sans" font-size="11" fill="#444">30</text><line x1="46" x2="52" y1="165.00" y2="165.00" stroke="#333" stroke-width="1"/><text x="42.5" y="167.80" text-anchor="end" font-family="Liberation Sans" font-size="11" fill="#444">32</text><line x1="46" x2="52" y1="147.00" y2="147.00" stroke="#333" stroke-width="1"/><text x="42.5" y="149.80" text-anchor="end" font-family="Liberation Sans" font-size="11" fill="#444">34</text><line x1="46" x2="52" y1="129.00" y2="129.00" stroke="#333" stroke-width="1"/><text x="42.5" y="131.80" text-anchor="end" font-family="Liberation Sans" font-size="11" fill="#444">36</text><line x1="46" x2="52" y1="111.00" y2="111.00" stroke="#333" stroke-width="1"/><text x="42.5" y="113.80" text-anchor="end" font-family="Liberation Sans" font-size="11" fill="#444">38</text><line x1="46" x2="52" y1="93.00" y2="93.00" stroke="#333" stroke-width="1"/><text x="42.5" y="95.80" text-anchor="end" font-family="Liberation Sans" font-size="11" fill="#444">40</text><line x1="46" x2="52" y1="75.00" y2="75.00" stroke="#333" stroke-width="1"/><text x="42.5" y="77.80" text-anchor="end" font-family="Liberation Sans" font-size="11" fill="#444">42</text><line x1="46" x2="52" y1="57.00" y2="57.00" stroke="#333" stroke-width="1"/><text x="42.5" y="59.80" text-anchor="end" font-family="Liberation Sans" font-size="11" fill="#444">44</text><line x1="46" x2="52" y1="39.00" y2="39.00" stroke="#333" stroke-width="1"/><text x="42.5" y="41.80" text-anchor="end" font-family="Liberation Sans" font-size="11" fill="#444">46</text><line x1="46" x2="52" y1="21.00" y2="21.00" stroke="#333" stroke-width="1"/><text x="42.5" y="23.80" text-anchor="end" font-family="Liberation Sans" font-size="11" fill="#444">48</text><path d="M52,279V273H363V279" fill="none" stroke="#333" stroke-width="1"/><line x1="52.00" x2="52.00" y1="273" y2="279" stroke="#333" stroke-width="1"/><text x="52.00" y="288.50" text-anchor="middle" font-family="Liberation Sans" font-size="11.2" fill="#444">1,600</text><line x1="103.83" x2="103.83" y1="273" y2="279" stroke="#333" stroke-width="1"/><text x="103.83" y="288.50" text-anchor="middle" font-family="Liberation Sans" font-size="11.2" fill="#444">1,800</text><line x1="155.67" x2="155.67" y1="273" y2="279" stroke="#333" stroke-width="1"/><text x="155.67" y="288.50" text-anchor="middle" font-family="Liberation Sans" font-size="11.2" fill="#444">2,000</text><line x1="207.50" x2="207.50" y1="273" y2="279" stroke="#333" stroke-width="1"/><text x="207.50" y="288.50" text-anchor="middle" font-family="Liberation Sans" font-size="11.2" fill="#444">2,200</text><line x1="259.33" x2="259.33" y1="273" y2="279" stroke="#333" stroke-width="1"/><text x="259.33" y="288.50" text-anchor="middle" font-family="Liberation Sans" font-size="11.2" fill="#444">2,400</text><line x1="311.17" x2="311.17" y1="273" y2="279" stroke="#333" stroke-width="1"/><text x="311.17" y="288.50" text-anchor="middle" font-family="Liberation Sans" font-size="11.2" fill="#444">2,600</text><line x1="363.00" x2="363.00" y1="273" y2="279" stroke="#333" stroke-width="1"/><text x="363.00" y="288.50" text-anchor="middle" font-family="Liberation Sans" font-size="11.2" fill="#444">2,800</text><text x="207.50" y="308" text-anchor="middle" font-family="Liberation Sans" font-size="12.7" fill="#666">weight</text><text transform="translate(17.30,147.00) rotate(-90)" text-anchor="middle" font-family="Liberation Sans" font-size="12" fill="#666">mpg</text></svg><div style="position:absolute;left:1353px;top:636.5px;width:28px;height:28.0px;box-sizing:border-box;background:#dbe7fb;border-radius:4px;box-shadow:0 1px 2px rgba(0,0,0,0.06);"></div><svg style="position:absolute;left:1358.5px;top:642.2px" width="16" height="16"><path d="M8 2.2V13.8M2.2 8H13.8" stroke="#4a78c8" stroke-width="1.3"/><path d="M6.6 3.6L8 2 9.4 3.6M6.6 12.4L8 14 9.4 12.4M3.6 6.6L2 8 3.6 9.4M12.4 6.6L14 8 12.4 9.4" fill="none" stroke="#4a78c8" stroke-width="1.1"/></svg><div style="position:absolute;left:1411px;top:591px;width:464px;height:350px;box-sizing:border-box;background:#fff;border:1px solid #e3e3e3;border-radius:4px;"></div><div style="position:absolute;left:1412px;top:592px;width:462px;height:34px;box-sizing:border-box;background:#f5f5f5;border-bottom:1px solid #e6e6e6;border-radius:3px 3px 0 0;"></div><div style="position:absolute;left:1420.8px;top:603.17px;font-family:'Liberation Sans', sans-serif;font-size:11.65px;line-height:11.65px;color:#666;font-weight:700;font-style:normal;white-space:nowrap;">cylinders = 4, origin = usa</div><svg style="position:absolute;left:1411px;top:626px;overflow:visible" width="463" height="314"><circle cx="162.70" cy="158.00" r="5" fill="#4682b4" fill-opacity="0.7"/><circle cx="110.55" cy="192.37" r="5" fill="#4682b4" fill-opacity="0.7"/><circle cx="197.15" cy="226.73" r="5" fill="#4682b4" fill-opacity="0.7"/><circle cx="152.18" cy="215.28" r="5" fill="#4682b4" fill-opacity="0.7"/><circle cx="88.78" cy="180.91" r="5" fill="#4682b4" fill-opacity="0.7"/><circle cx="129.69" cy="192.37" r="5" fill="#4682b4" fill-opacity="0.7"/><circle cx="197.15" cy="249.64" r="5" fill="#4682b4" fill-opacity="0.7"/><circle cx="153.61" cy="238.19" r="5" fill="#4682b4" fill-opacity="0.7"/><circle cx="194.04" cy="226.73" r="5" fill="#4682b4" fill-opacity="0.7"/><circle cx="138.78" cy="158.00" r="5" fill="#4682b4" fill-opacity="0.7"/><circle cx="195.48" cy="238.19" r="5" fill="#4682b4" fill-opacity="0.7"/><circle cx="173.71" cy="261.10" r="5" fill="#4682b4" fill-opacity="0.7"/><circle cx="207.44" cy="180.91" r="5" fill="#4682b4" fill-opacity="0.7"/><circle cx="229.21" cy="192.37" r="5" fill="#4682b4" fill-opacity="0.7"/><circle cx="129.45" cy="158.00" r="5" fill="#4682b4" fill-opacity="0.7"/><circle cx="252.41" cy="215.28" r="5" fill="#4682b4" fill-opacity="0.7"/><circle cx="241.17" cy="215.28" r="5" fill="#4682b4" fill-opacity="0.7"/><circle cx="236.39" cy="192.37" r="5" fill="#4682b4" fill-opacity="0.7"/><circle cx="160.55" cy="180.91" r="5" fill="#4682b4" fill-opacity="0.7"/><circle cx="107.92" cy="146.55" r="5" fill="#4682b4" fill-opacity="0.7"/><circle cx="138.78" cy="198.10" r="5" fill="#4682b4" fill-opacity="0.7"/><circle cx="234.71" cy="175.19" r="5" fill="#4682b4" fill-opacity="0.7"/><circle cx="136.63" cy="135.10" r="5" fill="#4682b4" fill-opacity="0.7"/><circle cx="171.32" cy="186.64" r="5" fill="#4682b4" fill-opacity="0.7"/><circle cx="276.58" cy="198.10" r="5" fill="#4682b4" fill-opacity="0.7"/><circle cx="280.17" cy="186.64" r="5" fill="#4682b4" fill-opacity="0.7"/><circle cx="111.75" cy="129.37" r="5" fill="#4682b4" fill-opacity="0.7"/><circle cx="117.49" cy="95.00" r="5" fill="#4682b4" fill-opacity="0.7"/><circle cx="51.70" cy="65.22" r="5" fill="#4682b4" fill-opacity="0.7"/><circle cx="271.79" cy="191.22" r="5" fill="#4682b4" fill-opacity="0.7"/><circle cx="136.63" cy="135.10" r="5" fill="#4682b4" fill-opacity="0.7"/><circle cx="154.57" cy="124.79" r="5" fill="#4682b4" fill-opacity="0.7"/><circle cx="277.77" cy="212.99" r="5" fill="#4682b4" fill-opacity="0.7"/><circle cx="304.09" cy="206.11" r="5" fill="#4682b4" fill-opacity="0.7"/><circle cx="312.46" cy="223.30" r="5" fill="#4682b4" fill-opacity="0.7"/><circle cx="79.21" cy="69.80" r="5" fill="#4682b4" fill-opacity="0.7"/><circle cx="259.83" cy="164.88" r="5" fill="#4682b4" fill-opacity="0.7"/><circle cx="147.39" cy="86.99" r="5" fill="#4682b4" fill-opacity="0.7"/><circle cx="135.43" cy="83.55" r="5" fill="#4682b4" fill-opacity="0.7"/><circle cx="259.83" cy="153.42" r="5" fill="#4682b4" fill-opacity="0.7"/><circle cx="232.56" cy="95.00" r="5" fill="#4682b4" fill-opacity="0.7"/><circle cx="128.25" cy="111.04" r="5" fill="#4682b4" fill-opacity="0.7"/><circle cx="261.74" cy="158.00" r="5" fill="#4682b4" fill-opacity="0.7"/><circle cx="307.68" cy="176.33" r="5" fill="#4682b4" fill-opacity="0.7"/><circle cx="339.49" cy="200.39" r="5" fill="#4682b4" fill-opacity="0.7"/><circle cx="290.93" cy="159.15" r="5" fill="#4682b4" fill-opacity="0.7"/><circle cx="316.05" cy="208.40" r="5" fill="#4682b4" fill-opacity="0.7"/><circle cx="216.77" cy="167.17" r="5" fill="#4682b4" fill-opacity="0.7"/><circle cx="251.46" cy="174.04" r="5" fill="#4682b4" fill-opacity="0.7"/><circle cx="247.87" cy="183.20" r="5" fill="#4682b4" fill-opacity="0.7"/><circle cx="191.65" cy="135.10" r="5" fill="#4682b4" fill-opacity="0.7"/><circle cx="69.64" cy="32.00" r="5" fill="#4682b4" fill-opacity="0.7"/><circle cx="150.98" cy="81.26" r="5" fill="#4682b4" fill-opacity="0.7"/><circle cx="110.31" cy="84.70" r="5" fill="#4682b4" fill-opacity="0.7"/><circle cx="190.45" cy="136.24" r="5" fill="#4682b4" fill-opacity="0.7"/><circle cx="244.28" cy="158.00" r="5" fill="#4682b4" fill-opacity="0.7"/><circle cx="252.65" cy="169.46" r="5" fill="#4682b4" fill-opacity="0.7"/><circle cx="194.04" cy="89.28" r="5" fill="#4682b4" fill-opacity="0.7"/><circle cx="237.10" cy="123.64" r="5" fill="#4682b4" fill-opacity="0.7"/><circle cx="225.14" cy="146.55" r="5" fill="#4682b4" fill-opacity="0.7"/><circle cx="275.38" cy="169.46" r="5" fill="#4682b4" fill-opacity="0.7"/><circle cx="306.48" cy="203.82" r="5" fill="#4682b4" fill-opacity="0.7"/><circle cx="347.15" cy="215.28" r="5" fill="#4682b4" fill-opacity="0.7"/><circle cx="129.45" cy="43.46" r="5" fill="#4682b4" fill-opacity="0.7"/><circle cx="129.45" cy="66.37" r="5" fill="#4682b4" fill-opacity="0.7"/><circle cx="239.50" cy="180.91" r="5" fill="#4682b4" fill-opacity="0.7"/><circle cx="188.06" cy="66.37" r="5" fill="#4682b4" fill-opacity="0.7"/><circle cx="326.82" cy="169.46" r="5" fill="#4682b4" fill-opacity="0.7"/><circle cx="288.54" cy="169.46" r="5" fill="#4682b4" fill-opacity="0.7"/><circle cx="170.12" cy="112.19" r="5" fill="#4682b4" fill-opacity="0.7"/><circle cx="249.07" cy="158.00" r="5" fill="#4682b4" fill-opacity="0.7"/><circle cx="271.79" cy="123.64" r="5" fill="#4682b4" fill-opacity="0.7"/><path d="M46,21H52V273H46" fill="none" stroke="#333" stroke-width="1"/><line x1="46" x2="52" y1="273.00" y2="273.00" stroke="#333" stroke-width="1"/><text x="42.5" y="275.80" text-anchor="end" font-family="Liberation Sans" font-size="11" fill="#444">18</text><line x1="46" x2="52" y1="250.09" y2="250.09" stroke="#333" stroke-width="1"/><text x="42.5" y="252.89" text-anchor="end" font-family="Liberation Sans" font-size="11" fill="#444">20</text><line x1="46" x2="52" y1="227.18" y2="227.18" stroke="#333" stroke-width="1"/><text x="42.5" y="229.98" text-anchor="end" font-family="Liberation Sans" font-size="11" fill="#444">22</text><line x1="46" x2="52" y1="204.27" y2="204.27" stroke="#333" stroke-width="1"/><text x="42.5" y="207.07" text-anchor="end" font-family="Liberation Sans" font-size="11" fill="#444">24</text><line x1="46" x2="52" y1="181.36" y2="181.36" stroke="#333" stroke-width="1"/><text x="42.5" y="184.16" text-anchor="end" font-family="Liberation Sans" font-size="11" fill="#444">26</text><line x1="46" x2="52" y1="158.45" y2="158.45" stroke="#333" stroke-width="1"/><text x="42.5" y="161.25" text-anchor="end" font-family="Liberation Sans" font-size="11" fill="#444">28</text><line x1="46" x2="52" y1="135.55" y2="135.55" stroke="#333" stroke-width="1"/><text x="42.5" y="138.35" text-anchor="end" font-family="Liberation Sans" font-size="11" fill="#444">30</text><line x1="46" x2="52" y1="112.64" y2="112.64" stroke="#333" stroke-width="1"/><text x="42.5" y="115.44" text-anchor="end" font-family="Liberation Sans" font-size="11" fill="#444">32</text><line x1="46" x2="52" y1="89.73" y2="89.73" stroke="#333" stroke-width="1"/><text x="42.5" y="92.53" text-anchor="end" font-family="Liberation Sans" font-size="11" fill="#444">34</text><line x1="46" x2="52" y1="66.82" y2="66.82" stroke="#333" stroke-width="1"/><text x="42.5" y="69.62" text-anchor="end" font-family="Liberation Sans" font-size="11" fill="#444">36</text><line x1="46" x2="52" y1="43.91" y2="43.91" stroke="#333" stroke-width="1"/><text x="42.5" y="46.71" text-anchor="end" font-family="Liberation Sans" font-size="11" fill="#444">38</text><line x1="46" x2="52" y1="21.00" y2="21.00" stroke="#333" stroke-width="1"/><text x="42.5" y="23.80" text-anchor="end" font-family="Liberation Sans" font-size="11" fill="#444">40</text><path d="M52,279V273H363V279" fill="none" stroke="#333" stroke-width="1"/><line x1="52.00" x2="52.00" y1="273" y2="279" stroke="#333" stroke-width="1"/><text x="52.00" y="288.50" text-anchor="middle" font-family="Liberation Sans" font-size="11.2" fill="#444">1,800</text><line x1="99.85" x2="99.85" y1="273" y2="279" stroke="#333" stroke-width="1"/><text x="99.85" y="288.50" text-anchor="middle" font-family="Liberation Sans" font-size="11.2" fill="#444">2,000</text><line x1="147.69" x2="147.69" y1="273" y2="279" stroke="#333" stroke-width="1"/><text x="147.69" y="288.50" text-anchor="middle" font-family="Liberation Sans" font-size="11.2" fill="#444">2,200</text><line x1="195.54" x2="195.54" y1="273" y2="279" stroke="#333" stroke-width="1"/><text x="195.54" y="288.50" text-anchor="middle" font-family="Liberation Sans" font-size="11.2" fill="#444">2,400</text><line x1="243.38" x2="243.38" y1="273" y2="279" stroke="#333" stroke-width="1"/><text x="243.38" y="288.50" text-anchor="middle" font-family="Liberation Sans" font-size="11.2" fill="#444">2,600</text><line x1="291.23" x2="291.23" y1="273" y2="279" stroke="#333" stroke-width="1"/><text x="291.23" y="288.50" text-anchor="middle" font-family="Liberation Sans" font-size="11.2" fill="#444">2,800</text><line x1="339.08" x2="339.08" y1="273" y2="279" stroke="#333" stroke-width="1"/><text x="339.08" y="288.50" text-anchor="middle" font-family="Liberation Sans" font-size="11.2" fill="#444">3,000</text><text x="207.50" y="308" text-anchor="middle" font-family="Liberation Sans" font-size="12.7" fill="#666">weight</text><text transform="translate(17.30,147.00) rotate(-90)" text-anchor="middle" font-family="Liberation Sans" font-size="12" fill="#666">mpg</text></svg><div style="position:absolute;left:1837px;top:636.5px;width:28px;height:28.0px;box-sizing:border-box;background:#dbe7fb;border-radius:4px;box-shadow:0 1px 2px rgba(0,0,0,0.06);"></div><svg style="position:absolute;left:1842.5px;top:642.2px" width="16" height="16"><path d="M8 2.2V13.8M2.2 8H13.8" stroke="#4a78c8" stroke-width="1.3"/><path d="M6.6 3.6L8 2 9.4 3.6M6.6 12.4L8 14 9.4 12.4M3.6 6.6L2 8 3.6 9.4M12.4 6.6L14 8 12.4 9.4" fill="none" stroke="#4a78c8" stroke-width="1.1"/></svg><div style="position:absolute;left:445px;top:961px;width:463px;height:350px;box-sizing:border-box;background:#fff;border:1px solid #e3e3e3;border-radius:4px;"></div><div style="position:absolute;left:446px;top:962px;width:461px;height:34px;box-sizing:border-box;background:#f5f5f5;border-bottom:1px solid #e6e6e6;border-radius:3px 3px 0 0;"></div><div style="position:absolute;left:454px;top:973.17px;font-family:'Liberation Sans', sans-serif;font-size:11.65px;line-height:11.65px;color:#666;font-weight:700;font-style:normal;white-space:nowrap;">cylinders = 5, origin = europe</div><div style="position:absolute;left:928px;top:961px;width:463px;height:350px;box-sizing:border-box;background:#fff;border:1px solid #e3e3e3;border-radius:4px;"></div><div style="position:absolute;left:929px;top:962px;width:461px;height:34px;box-sizing:border-box;background:#f5f5f5;border-bottom:1px solid #e6e6e6;border-radius:3px 3px 0 0;"></div><div style="position:absolute;left:937px;top:973.17px;font-family:'Liberation Sans', sans-serif;font-size:11.65px;line-height:11.65px;color:#666;font-weight:700;font-style:normal;white-space:nowrap;">cylinders = 5, origin = japan</div><div style="position:absolute;left:1411px;top:961px;width:464px;height:350px;box-sizing:border-box;background:#fff;border:1px solid #e3e3e3;border-radius:4px;"></div><div style="position:absolute;left:1412px;top:962px;width:462px;height:34px;box-sizing:border-box;background:#f5f5f5;border-bottom:1px solid #e6e6e6;border-radius:3px 3px 0 0;"></div><div style="position:absolute;left:1420.8px;top:973.17px;font-family:'Liberation Sans', sans-serif;font-size:11.65px;line-height:11.65px;color:#666;font-weight:700;font-style:normal;white-space:nowrap;">cylinders = 5, origin = usa</div></div></div><div style="position:absolute;left:0px;top:1040px;width:1920px;height:40px;box-sizing:border-box;background:#f5f5f5;"></div><div style="position:absolute;left:8px;top:1043px;width:64px;height:35px;box-sizing:border-box;background:#e6f2fc;border:1.5px solid #2f6da6;border-radius:5px;"></div><div style="position:absolute;left:25.6px;top:1053.75px;font-family:'Liberation Sans', sans-serif;font-size:13.5px;line-height:13.5px;color:#333;font-weight:400;font-style:normal;white-space:nowrap;">Main</div><svg style="position:absolute;left:85px;top:1054px" width="13" height="13"><path d="M6.5 1V12M1 6.5H12" stroke="#555" stroke-width="1.1"/></svg>
</body></html>
